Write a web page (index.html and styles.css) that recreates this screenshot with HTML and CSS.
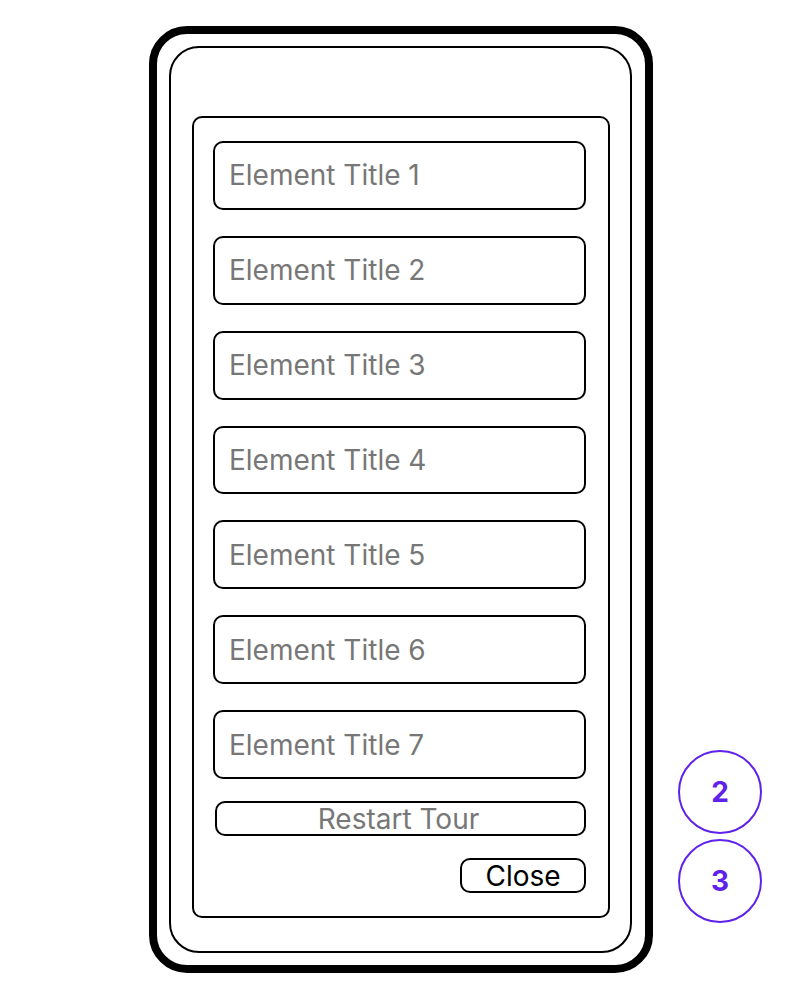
FILE: index.html
```html
<!DOCTYPE html>
<html lang="en">
<head>
    <meta charset="UTF-8">
    <title>Element List</title>
    <link rel="stylesheet" href="styles.css">
</head>
<body>
    <div class="stage">
        <div class="phone">
            <div class="screen">
                <div class="panel">
                    <div class="item">Element Title 1</div>
                    <div class="item">Element Title 2</div>
                    <div class="item">Element Title 3</div>
                    <div class="item">Element Title 4</div>
                    <div class="item">Element Title 5</div>
                    <div class="item">Element Title 6</div>
                    <div class="item">Element Title 7</div>
                    <button class="restart-btn">Restart Tour</button>
                    <div class="actions">
                        <button class="close-btn">Close</button>
                    </div>
                </div>
            </div>
        </div>

        <div class="markers">
            <div class="marker">2</div>
            <div class="marker">3</div>
        </div>
    </div>
</body>
</html>
```

FILE: styles.css
```css
body {
    margin: 0;
    background: #fff;
    font-family: 'Inter', 'Noto Sans', sans-serif;
}
.stage {
    display: flex;
    padding: 26px 0 0 149px;
}
.phone {
    width: 504px;
    height: 947px;
    box-sizing: border-box;
    border: 8px solid #000;
    border-radius: 38px;
    padding: 12px 13px 12px 12px;
}
.screen {
    height: 100%;
    box-sizing: border-box;
    border: 2px solid #000;
    border-radius: 30px;
    padding: 68px 20px 33px 21px;
}
.panel {
    height: 100%;
    box-sizing: border-box;
    border: 2px solid #000;
    border-radius: 10px;
    padding: 23px 22px 23px 19px;
    display: flex;
    flex-direction: column;
    gap: 26px;
}
.item {
    height: 69px;
    box-sizing: border-box;
    border: 2.5px solid #000;
    border-radius: 10px;
    padding: 0 14px;
    display: flex;
    align-items: center;
    font-size: 28px;
    color: #777;
}
.restart-btn {
    height: 35px;
    margin-top: -4px;
    margin-left: 2px;
    border: 2.5px solid #000;
    border-radius: 10px;
    background: #fff;
    font-family: inherit;
    font-size: 28px;
    color: #777;
    padding: 2px 4px 0 0;
    line-height: 1;
}
.actions {
    display: flex;
    justify-content: flex-end;
    margin-top: -4px;
}
.close-btn {
    width: 126px;
    height: 35px;
    border: 2.5px solid #000;
    border-radius: 10px;
    background: #fff;
    font-family: inherit;
    font-size: 28px;
    color: #000;
    padding: 2px 0 0;
    line-height: 1;
}
.markers {
    display: flex;
    flex-direction: column;
    gap: 5px;
    align-self: flex-end;
    margin: 0 0 50px 25px;
}
.marker {
    width: 84px;
    height: 84px;
    box-sizing: border-box;
    border: 2px solid #5f22ea;
    border-radius: 50%;
    display: flex;
    align-items: center;
    justify-content: center;
    font-size: 28px;
    font-weight: 700;
    color: #5f22ea;
}
```
